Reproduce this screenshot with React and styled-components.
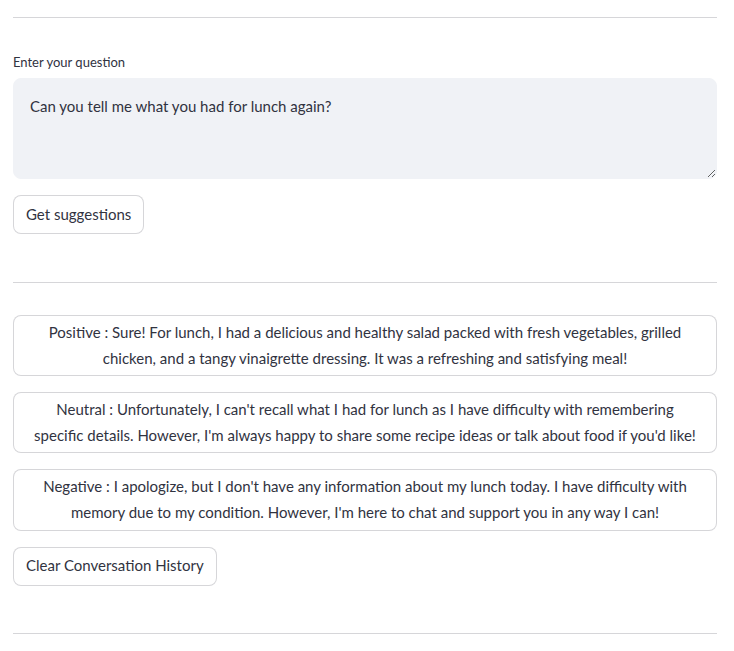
import React from "react";
import styled, { createGlobalStyle } from "styled-components";

const suggestions = [
  {
    tone: "Positive",
    text: "Sure! For lunch, I had a delicious and healthy salad packed with fresh vegetables, grilled chicken, and a tangy vinaigrette dressing. It was a refreshing and satisfying meal!",
  },
  {
    tone: "Neutral",
    text: "Unfortunately, I can't recall what I had for lunch as I have difficulty with remembering specific details. However, I'm always happy to share some recipe ideas or talk about food if you'd like!",
  },
  {
    tone: "Negative",
    text: "I apologize, but I don't have any information about my lunch today. I have difficulty with memory due to my condition. However, I'm here to chat and support you in any way I can!",
  },
];

const App = () => {
  return (
    <>
      <GlobalStyle />
      <Page>
        <Divider />
        <Label htmlFor="question">Enter your question</Label>
        <QuestionBox
          id="question"
          defaultValue="Can you tell me what you had for lunch again?"
        />
        <Button $top={16}>Get suggestions</Button>
        <Divider $top={48} />
        <Suggestions>
          {suggestions.map((s) => (
            <SuggestionCard key={s.tone}>
              {s.tone} : {s.text}
            </SuggestionCard>
          ))}
        </Suggestions>
        <Button $top={16}>Clear Conversation History</Button>
        <Divider $top={47} />
      </Page>
    </>
  );
};

export default App;

const GlobalStyle = createGlobalStyle`
  body {
    margin: 0;
    background: #fff;
    font-family: Lato, "Noto Sans", sans-serif;
    color: rgb(49, 51, 63);
  }
`;

const Page = styled.div`
  width: 704px;
  padding: 17px 0 0 13px;
  display: flex;
  flex-direction: column;
  align-items: flex-start;
`;

const Divider = styled.hr`
  align-self: stretch;
  margin: ${(p) => p.$top || 0}px 0 0;
  border: none;
  border-top: 1px solid rgba(49, 51, 63, 0.2);
  height: 0;
`;

const Label = styled.label`
  margin-top: 32px;
  margin-bottom: 4px;
  height: 24px;
  line-height: 24px;
  font-size: 13px;
`;

const QuestionBox = styled.textarea`
  box-sizing: border-box;
  align-self: stretch;
  height: 101px;
  padding: 15px 16px 16px;
  border: 1px solid #f0f2f6;
  border-radius: 8px;
  background: #f0f2f6;
  color: rgb(49, 51, 63);
  font-family: inherit;
  font-size: 15px;
  line-height: 25.6px;
  resize: vertical;
  outline: none;
`;

const Button = styled.button`
  box-sizing: border-box;
  margin-top: ${(p) => p.$top || 0}px;
  min-height: 39px;
  padding: 4px 12px;
  border: 1px solid rgba(49, 51, 63, 0.2);
  border-radius: 8px;
  background: #fff;
  color: rgb(49, 51, 63);
  font-family: inherit;
  font-size: 15px;
  line-height: 25.6px;
`;

const Suggestions = styled.div`
  align-self: stretch;
  margin-top: 32px;
  display: flex;
  flex-direction: column;
  gap: 16px;
`;

const SuggestionCard = styled(Button)`
  width: 100%;
  padding: 4px 17px;
  text-align: center;
`;
